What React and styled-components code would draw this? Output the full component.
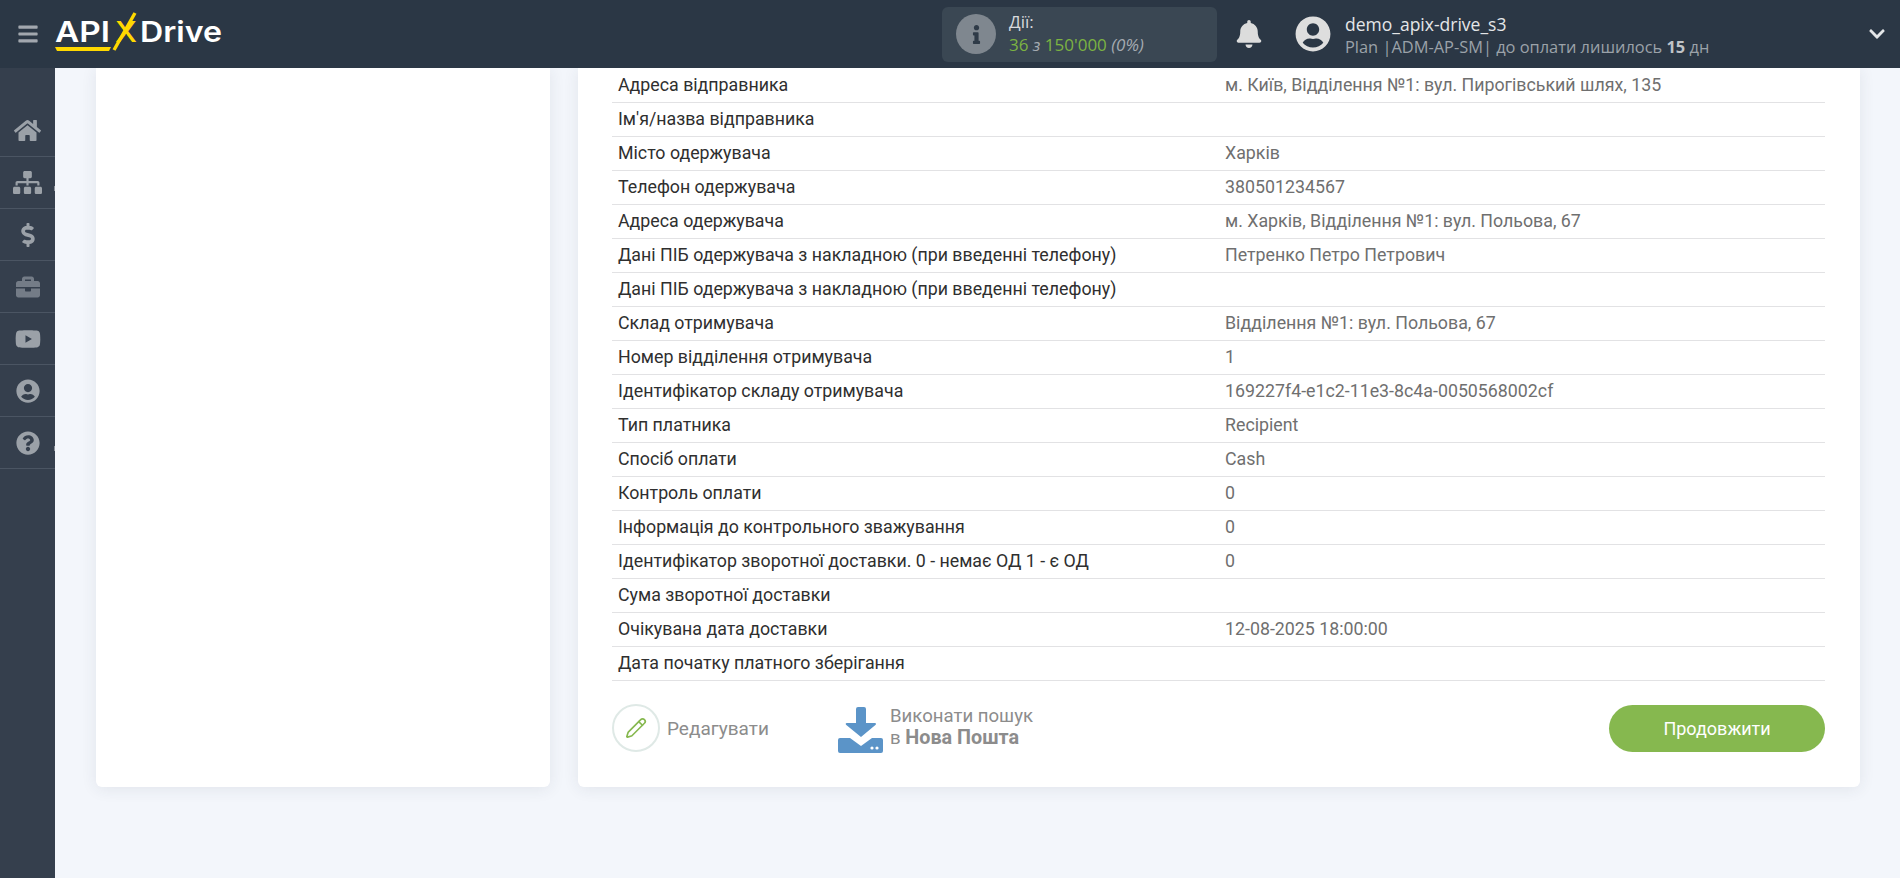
import React from 'react';
import styled, { createGlobalStyle } from 'styled-components';
import {
  FaHome, FaSitemap, FaDollarSign, FaBriefcase, FaYoutube, FaUserCircle,
  FaQuestionCircle, FaBell, FaInfo, FaChevronDown, FaBars,
} from 'react-icons/fa';
import { Pencil } from 'lucide-react';

const GlobalStyle = createGlobalStyle`
  html, body {
    margin: 0;
    height: 100%;
    overflow: hidden;
    background: #f3f6fb;
    font-family: Roboto, "Liberation Sans", sans-serif;
  }
  * { box-sizing: border-box; }
`;

const Page = styled.div`
  height: 878px;
  display: flex;
  flex-direction: column;
`;

const TopBar = styled.header`
  height: 68px;
  flex: none;
  background: #2b3745;
  display: flex;
  align-items: center;
  font-family: "Open Sans", sans-serif;
  position: relative;
  z-index: 2;
`;

const Burger = styled.button`
  width: 55px;
  height: 68px;
  flex: none;
  border: none;
  padding: 0;
  background: none;
  color: #a2a7ae;
  font-size: 22px;
  display: flex;
  align-items: center;
  justify-content: center;
`;

const LogoWrap = styled.div`
  width: 170px;
  height: 44px;
  flex: none;
`;

const StatsBox = styled.div`
  width: 275px;
  height: 55px;
  margin-left: 717px;
  flex: none;
  background: #3a4753;
  border-radius: 6px;
  display: flex;
  align-items: center;
  padding-left: 14px;
  gap: 13px;
`;

const InfoCircle = styled.div`
  width: 40px;
  height: 40px;
  border-radius: 50%;
  background: #7f878f;
  color: #2f3b48;
  font-size: 19px;
  display: flex;
  align-items: center;
  justify-content: center;
`;

const StatsText = styled.div`
  line-height: 23px;
  margin-top: -3px;
`;

const StatsLabel = styled.div`
  font-size: 17px;
  color: #d8dadd;
`;

const StatsValue = styled.div`
  font-size: 17px;
  color: #7cb342;
`;

const StatsMuted = styled.i`
  color: #a5abb1;
`;

const BellButton = styled.div`
  margin-left: 18px;
  width: 28px;
  font-size: 28px;
  color: #dcdcdc;
  display: flex;
  flex: none;
`;

const UserIcon = styled.div`
  margin-left: 32px;
  font-size: 36px;
  color: #dedede;
  display: flex;
  flex: none;
`;

const UserInfo = styled.div`
  margin-left: 14px;
  flex: 1;
`;

const UserName = styled.div`
  font-size: 17.5px;
  line-height: 24px;
  color: #e4e6e8;
`;

const UserPlan = styled.div`
  font-size: 16.4px;
  line-height: 21px;
  color: #9ba2a9;

  b {
    color: #c0c4c8;
  }
`;

const Chevron = styled.div`
  width: 18px;
  margin-right: 14px;
  font-size: 18px;
  color: #e4e6e8;
  display: flex;
  flex: none;
`;

const Body = styled.div`
  flex: 1;
  min-height: 0;
  display: flex;
`;

const SideNav = styled.nav`
  width: 55px;
  flex: none;
  background: #353f4d;
  padding-top: 37px;
`;

const NavItem = styled.div`
  height: 52px;
  border-bottom: 1px solid #4b5563;
  color: ${p => (p.$dim ? '#747c87' : '#9ba1a8')};
  font-size: ${p => p.$size || 25}px;
  display: flex;
  align-items: center;
  justify-content: center;
  position: relative;

  ${p => p.$tick && `
    &::after {
      content: '';
      position: absolute;
      right: 0;
      top: 29px;
      width: 1px;
      height: 5px;
      background: #8d939b;
    }
  `}
`;

const Main = styled.main`
  flex: 1;
  min-width: 0;
  display: flex;
  align-items: flex-start;
  gap: 28px;
  padding-left: 41px;
  padding-right: 40px;
`;

const LeftCard = styled.section`
  width: 454px;
  height: 719px;
  flex: none;
  background: #fff;
  border-radius: 0 0 6px 6px;
  box-shadow: 0 2px 16px rgba(40, 50, 80, 0.09);
`;

const RightCard = styled.section`
  flex: 1;
  height: 719px;
  background: #fff;
  border-radius: 0 0 6px 6px;
  box-shadow: 0 2px 16px rgba(40, 50, 80, 0.09);
  padding: 1px 35px 0 34px;
`;

const Row = styled.div`
  height: 34px;
  border-bottom: 1px solid #e2e2e4;
  display: grid;
  grid-template-columns: 607px 1fr;
  padding: 0 6px 2px;
  align-items: center;
  font-size: 17.8px;
`;

const RowLabel = styled.div`
  color: #2f2f2f;
`;

const RowValue = styled.div`
  color: #6f6f6f;
`;

const Actions = styled.div`
  display: flex;
  align-items: center;
  margin-top: 23px;
`;

const EditCircle = styled.div`
  width: 48px;
  height: 48px;
  border-radius: 50%;
  border: 2px solid #dfe9e6;
  color: #86b84f;
  display: flex;
  align-items: center;
  justify-content: center;
`;

const EditLabel = styled.div`
  margin-left: 7px;
  width: 171px;
  font-size: 19px;
  color: #8c8c8c;
`;

const SearchIcon = styled.div`
  width: 45px;
  height: 46px;
  margin: 2px 0 -2px;
  display: flex;
  flex: none;
`;

const SearchText = styled.div`
  margin: -2px 0 0 7px;
  font-size: 18.6px;
  line-height: 22px;
  color: #8c8c8c;

  b {
    font-size: 19.8px;
  }
`;

const NextButton = styled.button`
  margin-left: auto;
  width: 216px;
  height: 47px;
  border: none;
  border-radius: 24px;
  background: #86b84f;
  color: #fff;
  font-family: Roboto, sans-serif;
  font-size: 18px;
`;

const rows = [
  ['Адреса відправника', 'м. Київ, Відділення №1: вул. Пирогівський шлях, 135'],
  ["Ім'я/назва відправника", ''],
  ['Місто одержувача', 'Харків'],
  ['Телефон одержувача', '380501234567'],
  ['Адреса одержувача', 'м. Харків, Відділення №1: вул. Польова, 67'],
  ['Дані ПІБ одержувача з накладною (при введенні телефону)', 'Петренко Петро Петрович'],
  ['Дані ПІБ одержувача з накладною (при введенні телефону)', ''],
  ['Склад отримувача', 'Відділення №1: вул. Польова, 67'],
  ['Номер відділення отримувача', '1'],
  ['Ідентифікатор складу отримувача', '169227f4-e1c2-11e3-8c4a-0050568002cf'],
  ['Тип платника', 'Recipient'],
  ['Спосіб оплати', 'Cash'],
  ['Контроль оплати', '0'],
  ['Інформація до контрольного зважування', '0'],
  ['Ідентифікатор зворотної доставки. 0 - немає ОД 1 - є ОД', '0'],
  ['Сума зворотної доставки', ''],
  ['Очікувана дата доставки', '12-08-2025 18:00:00'],
  ['Дата початку платного зберігання', ''],
];

const Logo = () => (
  <svg width="170" height="44" viewBox="0 0 170 44">
    <text x="0" y="30" fontFamily="Inter, sans-serif" fontWeight="600" fontSize="29" fill="#fff" textLength="55" lengthAdjust="spacingAndGlyphs">API</text>
    <polygon points="0,35 56,35 54,39 2,39" fill="#ffd800" />
    <text x="60" y="30" fontFamily="Inter, sans-serif" fontWeight="500" fontSize="29" fill="#ffd800" textLength="22" lengthAdjust="spacingAndGlyphs">X</text>
    <line x1="80" y1="1" x2="59" y2="38" stroke="#ffd800" strokeWidth="3.4" />
    <text x="85" y="30" fontFamily="Inter, sans-serif" fontWeight="600" fontSize="29" fill="#fff" textLength="82" lengthAdjust="spacingAndGlyphs">Drive</text>
  </svg>
);

const DownloadIcon = () => (
  <svg width="45" height="46" viewBox="0 0 45 46">
    <path d="M18 2 a2 2 0 0 1 2-2 h6 a2 2 0 0 1 2 2 v14 h9 a1 1 0 0 1 .7 1.7 L23 30 8 17.7 a1 1 0 0 1 .7-1.7 H18 z" fill="#5b94c8" />
    <path d="M2 31 h10 l11 8 11-8 h9 a2 2 0 0 1 2 2 v11 a2 2 0 0 1-2 2 H2 a2 2 0 0 1-2-2 V33 a2 2 0 0 1 2-2 z" fill="#5b94c8" />
    <circle cx="34" cy="41" r="1.6" fill="#fff" />
    <circle cx="39" cy="41" r="1.6" fill="#fff" />
  </svg>
);

const App = () => (
  <Page>
    <GlobalStyle />
    <TopBar>
      <Burger><FaBars /></Burger>
      <LogoWrap><Logo /></LogoWrap>
      <StatsBox>
        <InfoCircle><FaInfo /></InfoCircle>
        <StatsText>
          <StatsLabel>Дії:</StatsLabel>
          <StatsValue>36 <StatsMuted>з</StatsMuted> 150'000 <StatsMuted>(0%)</StatsMuted></StatsValue>
        </StatsText>
      </StatsBox>
      <BellButton><FaBell /></BellButton>
      <UserIcon><FaUserCircle /></UserIcon>
      <UserInfo>
        <UserName>demo_apix-drive_s3</UserName>
        <UserPlan>Plan |ADM-AP-SM| до оплати лишилось <b>15</b> дн</UserPlan>
      </UserInfo>
      <Chevron><FaChevronDown /></Chevron>
    </TopBar>
    <Body>
      <SideNav>
        <NavItem $size={27}><FaHome /></NavItem>
        <NavItem $size={29} $tick><FaSitemap /></NavItem>
        <NavItem $size={24}><FaDollarSign /></NavItem>
        <NavItem $dim $size={24}><FaBriefcase /></NavItem>
        <NavItem $size={26}><FaYoutube /></NavItem>
        <NavItem $size={24}><FaUserCircle /></NavItem>
        <NavItem $size={24} $tick><FaQuestionCircle /></NavItem>
      </SideNav>
      <Main>
        <LeftCard />
        <RightCard>
          {rows.map(([label, value], i) => (
            <Row key={i}>
              <RowLabel>{label}</RowLabel>
              <RowValue>{value}</RowValue>
            </Row>
          ))}
          <Actions>
            <EditCircle><Pencil size={22} strokeWidth={1.8} /></EditCircle>
            <EditLabel>Редагувати</EditLabel>
            <SearchIcon><DownloadIcon /></SearchIcon>
            <SearchText>Виконати пошук<br />в <b>Нова Пошта</b></SearchText>
            <NextButton>Продовжити</NextButton>
          </Actions>
        </RightCard>
      </Main>
    </Body>
  </Page>
);

export default App;
